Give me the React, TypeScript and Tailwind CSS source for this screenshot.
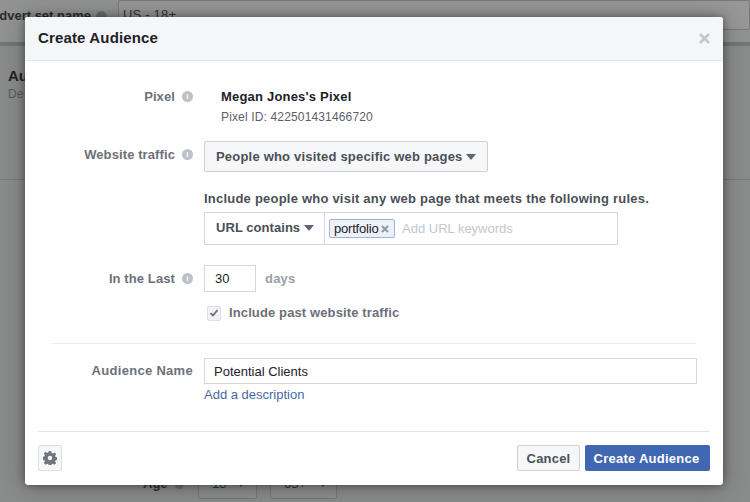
const font = "font-['Liberation_Sans',Arial,sans-serif]";

function InfoDot() {
  return (
    <span className="ml-[7px] flex h-[11px] w-[11px] shrink-0 items-center justify-center rounded-full bg-[#bdc1c9] text-[8px] font-bold leading-none text-white">
      i
    </span>
  );
}

function Caret({ className, fill = "#5f6673" }: { className?: string; fill?: string }) {
  return (
    <svg width="10" height="6" viewBox="0 0 10 6" className={className}>
      <path d="M0 0h10L5 6z" fill={fill} />
    </svg>
  );
}

function Label({ text, info = true }: { text: string; info?: boolean }) {
  return (
    <div
      className={
        info
          ? "flex w-[168px] shrink-0 items-center justify-end text-[13px] font-bold tracking-[0.1px] text-[#6e7079]"
          : "flex w-[168px] shrink-0 items-center justify-end text-[13px] font-bold tracking-[0.3px] text-[#6e7079]"
      }
    >
      {text}
      {info && <InfoDot />}
    </div>
  );
}

function Backdrop() {
  return (
    <div className="h-[502px] w-[750px] overflow-hidden bg-[#8a8b8b]">
      <div className="flex h-[46px] border-b-[4px] border-[#747576] bg-[#919292]">
        <div className="flex h-[30px] w-[107px] shrink-0 items-center justify-end overflow-hidden whitespace-nowrap pt-[2px] text-[13px] font-bold text-[#2b2c2e]">
          dvert set name
          <span className="ml-[5px] h-[11px] w-[11px] shrink-0 rounded-full bg-[#6f7072]" />
        </div>
        <div className="ml-[11px] h-[30px] flex-1 rounded-[2px] border border-[#79797a] bg-[#979797] pl-[4px] pt-[4px] text-[13px] tracking-[0.2px] text-[#333]">
          US - 18+
        </div>
      </div>
      <div className="h-[134px] border-b border-[#7a7b7b] pl-2 pt-[20px]">
        <div className="text-[15px] font-bold leading-[20px] text-[#222]">Au</div>
        <div className="text-[12px] leading-[16px] text-[#5c5d5e]">De</div>
      </div>
    </div>
  );
}

export default function App() {
  return (
    <div className={`relative h-[502px] w-[750px] overflow-hidden ${font}`}>
      <Backdrop />

      {/* age selects peeking out under the modal */}
      <div className="absolute left-[143px] top-[475px] flex items-center text-[13px] font-bold leading-[18px] text-[#333]">
        Age
        <span className="ml-[7px] h-[9px] w-[9px] rounded-full bg-[#707172]" />
      </div>
      <div className="absolute left-[198px] top-[468px] flex h-[31px] w-[59px] items-center rounded-[2px] border border-[#777879] bg-[#8d8e8e] pl-[13px] text-[13px] text-[#333]">
        18
        <Caret className="ml-[10px]" fill="#404144" />
      </div>
      <div className="absolute left-[270px] top-[468px] flex h-[31px] w-[67px] items-center rounded-[2px] border border-[#777879] bg-[#8d8e8e] pl-[13px] text-[13px] text-[#333]">
        65+
        <Caret className="ml-[12px]" fill="#404144" />
      </div>

      {/* modal */}
      <div className="absolute left-[25px] top-[17px] h-[468px] w-[698px] overflow-hidden rounded-[3px] bg-white shadow-[0_0_8px_rgba(0,0,0,0.4),0_2px_26px_rgba(0,0,0,0.25)]">
        <div className="flex h-[44px] items-center justify-between border-b border-[#e5e6e9] bg-[#f5f6f7] pl-[13px] pr-[13px]">
          <span className="text-[15px] font-bold tracking-[0.15px] text-[#1d2129]">Create Audience</span>
          <svg width="11" height="11" viewBox="0 0 11 11">
            <path d="M1 1l9 9M10 1l-9 9" stroke="#c4c7cd" strokeWidth="2.6" />
          </svg>
        </div>

        <div className="flex flex-col">
          {/* Pixel */}
          <div className="mt-[27px] flex">
            <div className="flex h-[17px] items-center">
              <Label text="Pixel" />
            </div>
            <div className="ml-[28px]">
              <div className="text-[13px] font-bold leading-[17px] tracking-[0.2px] text-[#1d2129]">
                Megan Jones's Pixel
              </div>
              <div className="mt-[4px] text-[12px] leading-[16px] tracking-[0.15px] text-[#5d6068]">
                Pixel ID: 422501431466720
              </div>
            </div>
          </div>

          {/* Website traffic */}
          <div className="mt-[16px] flex">
            <div className="flex h-[27px] items-center">
              <Label text="Website traffic" />
            </div>
            <div className="ml-[11px]">
              <div className="flex h-[31px] w-[284px] items-center rounded-[2px] border border-[#ced0d4] bg-[#f6f7f9] pl-[11px] text-[13px] font-bold tracking-[0.2px] text-[#4b4f56]">
                People who visited specific web pages
                <Caret className="ml-[3px]" />
              </div>
              <div className="mt-[19px] whitespace-nowrap text-[13px] font-bold leading-[16px] tracking-[0.22px] text-[#4b4f56]">
                Include people who visit any web page that meets the following rules.
              </div>
              <div className="mt-[5px] flex h-[33px] w-[414px] border border-[#d3d6db]">
                <div className="flex w-[120px] items-center border-r border-[#d3d6db] pb-[2px] pl-[11px] text-[13px] font-bold tracking-[0.05px] text-[#4b4f56]">
                  URL contains
                  <Caret className="ml-[4px]" />
                </div>
                <div className="flex items-center pl-[4px] text-[13px]">
                  <span className="flex h-[19px] w-[66px] items-center rounded-[2px] border border-[#9cb4d8] bg-[#edf1f7] pl-[4px] tracking-[-0.2px] text-[#1d2129]">
                    portfolio
                    <svg width="8" height="8" viewBox="0 0 7 7" className="ml-[3px]">
                      <path d="M.8.8l5.4 5.4M6.2.8L.8 6.2" stroke="#8b9ab0" strokeWidth="1.8" />
                    </svg>
                  </span>
                  <span className="ml-[7px] text-[#c3c7ce]">Add URL keywords</span>
                </div>
              </div>
            </div>
          </div>

          {/* In the Last */}
          <div className="mt-[20px] flex items-center">
            <Label text="In the Last" />
            <div className="ml-[11px] flex h-[27px] w-[52px] items-center border border-[#d3d6db] pl-[10px] text-[13px] text-[#1d2129]">
              30
            </div>
            <span className="ml-[9px] text-[13px] font-bold tracking-[0.2px] text-[#9a9ea6]">days</span>
          </div>

          {/* past traffic */}
          <div className="mb-[22px] ml-[182px] mt-[13px] flex h-[16px] items-center">
            <span className="flex h-[15px] w-[14px] items-center justify-center rounded-[2px] border border-[#dddfe2] bg-[#f1f2f4]">
              <svg width="10" height="8" viewBox="0 0 9 8">
                <path d="M1 4.2l2.4 2.3L8 1.2" fill="none" stroke="#6b6f77" strokeWidth="1.8" />
              </svg>
            </span>
            <span className="ml-[8px] text-[13px] font-bold tracking-[0.12px] text-[#6e7079]">
              Include past website traffic
            </span>
          </div>

          {/* Audience name */}
          <div className="mx-[27px] border-t border-[#e9eaed]" />
          <div className="mt-[14px] flex">
            <div className="flex h-[26px] items-center">
              <Label text="Audience Name" info={false} />
            </div>
            <div className="ml-[11px]">
              <div className="flex h-[26px] w-[493px] items-center border border-[#d3d6db] pl-[9px] pt-[1px] text-[13px] text-[#1d2129]">
                Potential Clients
              </div>
              <div className="mt-[3px] text-[13px] leading-[16px] text-[#4a6aa5]">Add a description</div>
            </div>
          </div>

          {/* footer */}
          <div className="mx-[13px] mt-[28px] border-t border-[#e2e3e6]" />
          <div className="mx-[13px] mt-[13px] flex items-center justify-between">
            <button className="flex h-[26px] w-[24px] items-center justify-center rounded-[2px] border border-[#dddfe2] bg-[#f6f7f9]">
              <svg width="14" height="14" viewBox="0 0 14 14">
                <path
                  fillRule="evenodd"
                  d="M5.8 0h2.4l.4 2 1.2.5 1.7-1.1 1.7 1.7-1.1 1.7.5 1.2 2 .4v2.4l-2 .4-.5 1.2 1.1 1.7-1.7 1.7-1.7-1.1-1.2.5-.4 2H5.800l-.4-2-1.200-.5-1.700 1.100-1.700-1.700 1.100-1.700-.5-1.200-2-.4V5.800l2-.4.5-1.200-1.100-1.700 1.700-1.700 1.700 1.100 1.200-.5zM7 4.800a2.200 2.200 0 1 0 0 4.400 2.200 2.200 0 0 0 0-4.400z"
                  fill="#71757e"
                />
              </svg>
            </button>
            <div className="flex items-center gap-[5px]">
              <button className="h-[26px] w-[63px] rounded-[2px] border border-[#ced0d4] bg-[#f6f7f9] pt-[1px] text-[13px] font-bold tracking-[0.2px] text-[#4b4f56]">
                Cancel
              </button>
              <button className="h-[26px] w-[125px] rounded-[2px] bg-[#4267b2] pr-[2px] pt-[1px] text-[13px] font-bold tracking-[0.25px] text-white">
                Create Audience
              </button>
            </div>
          </div>
        </div>
      </div>
    </div>
  );
}
